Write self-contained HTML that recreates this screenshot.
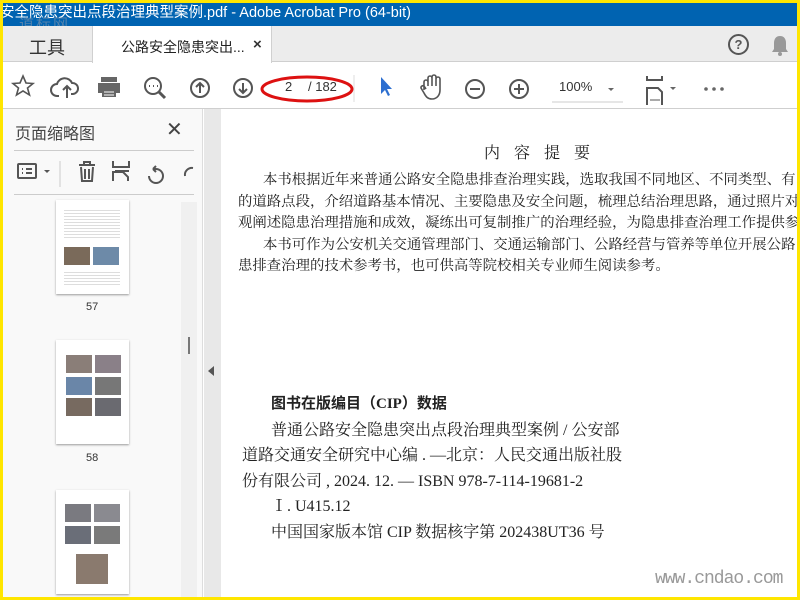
<!DOCTYPE html>
<html><head><meta charset="utf-8"><style>
*{margin:0;padding:0;box-sizing:border-box}
body{width:800px;height:600px;overflow:hidden;background:#ffe600;font-family:"Liberation Sans","Noto Sans CJK SC",sans-serif;position:relative}
.a{position:absolute}
.serif{font-family:"Liberation Serif","Noto Serif CJK SC",serif;color:#222}
</style></head><body>
<div class="a" style="left:3px;top:3px;width:794px;height:594px;background:#fff;overflow:hidden">
 <div class="a" style="left:-3px;top:0;width:797px;height:23px;background:#0063b1;color:#fff;font-size:14.5px;line-height:20px;white-space:nowrap">安全隐患突出点段治理典型案例.pdf - Adobe Acrobat Pro (64-bit)</div>
 <div class="a" style="left:16px;top:10px;color:#8a98aa;font-size:15px;opacity:.6;letter-spacing:2px">道标网</div>
 <div class="a" style="left:0;top:23px;width:794px;height:36px;background:#ececec;border-bottom:1px solid #cfcfcf"></div>
 <div class="a" style="left:26px;top:31px;font-size:18px;color:#333">工具</div>
 <div class="a" style="left:89px;top:23px;width:180px;height:37px;background:#fff;border-left:1px solid #d0d0d0;border-right:1px solid #d0d0d0"></div>
 <div class="a" style="left:118px;top:34px;font-size:14px;color:#222">公路安全隐患突出...</div>
 <div class="a" style="left:250px;top:33px;font-size:15px;color:#333;font-weight:bold">×</div>
 <div class="a" style="left:725px;top:31px;width:21px;height:21px;border:2px solid #555;border-radius:50%;text-align:center;font-size:13px;line-height:17px;color:#555;font-weight:bold">?</div>
 <svg class="a" style="left:767px;top:31px" width="20" height="24"><path d="M10 2c-4 0-6 3-6 7v6l-2 3h16l-2-3V9c0-4-2-7-6-7z" fill="#999"/><circle cx="10" cy="20" r="2" fill="#999"/></svg>
 <div class="a" style="left:0;top:105px;width:794px;height:1px;background:#cfcfcf"></div>
 <svg class="a" style="left:0;top:59px" width="794" height="46" fill="none" stroke="#555" stroke-width="2">
  <path d="M20 14l3 7 7 .5-5.5 4.5 2 7L20 29l-6.5 4 2-7L10 21.5l7-.5z" stroke-width="1.6"/>
  <path d="M56 34h-2a6 6 0 010-12 8 8 0 0115-1 5 5 0 011 11h-2M64 36V24m-4 4l4-4 4 4"/>
  <path d="M98 20h16v-5H98zM95 21h22v10H95zM99 27h14v8H99z" fill="#666" stroke="none"/><path d="M101 30h10M101 33h10" stroke="#fff" stroke-width="1"/>
  <circle cx="150" cy="24" r="8"/><path d="M156 30l6 6" stroke-width="3"/><path d="M146 24h1M150 24h1M154 24h1"/>
  <circle cx="197" cy="26" r="9"/><path d="M197 31v-10m-4 4l4-4 4 4"/>
  <circle cx="240" cy="26" r="9"/><path d="M240 21v10m-4-4l4 4 4-4"/>
  <path d="M351 13v27" stroke="#ddd" stroke-width="1"/>
  <path d="M378 15v17l4-4 3 6 2-1-3-6h5z" fill="#2d6fd0" stroke="none"/>
  <path d="M421 28v-8a2 2 0 014 0v4-8a2 2 0 014 0v8-9a2 2 0 014 0v9-7a2 2 0 014 0v11c0 5-3 9-8 9-4 0-6-2-8-6l-3-5a2 2 0 013-2l2 3" stroke-width="1.6"/>
  <circle cx="472" cy="27" r="9"/><path d="M467 27h10"/>
  <circle cx="516" cy="27" r="9"/><path d="M511 27h10M516 22v10"/>
  <path d="M549 40h71" stroke="#ccc" stroke-width="1"/>
  <path d="M605 26h6l-3 3z" fill="#666" stroke="none"/>
  <path d="M644 14v4h15v-4M644 43V26h11l4 4v13" /><path d="M647 38h10" stroke-width="1"/>
  <path d="M667 25h6l-3 3z" fill="#666" stroke="none"/>
  <circle cx="703" cy="27" r="1.8" fill="#666" stroke="none"/><circle cx="711" cy="27" r="1.8" fill="#666" stroke="none"/><circle cx="719" cy="27" r="1.8" fill="#666" stroke="none"/>
  <ellipse cx="304" cy="27" rx="45" ry="12" stroke="#d11" stroke-width="3"/>
 </svg>
 <div class="a" style="left:282px;top:76px;font-size:13px;color:#333">2</div>
 <div class="a" style="left:305px;top:76px;font-size:13px;color:#333">/ 182</div>
 <div class="a" style="left:556px;top:76px;font-size:13px;color:#333">100%</div>
 <div class="a" style="left:0;top:106px;width:200px;height:488px;background:#f9f9f9;border-right:1px solid #ddd"></div>
 <div class="a" style="left:12px;top:117px;font-size:16px;color:#444">页面缩略图</div>
 <div class="a" style="left:163px;top:114px;font-size:20px;color:#444">✕</div>
 <div class="a" style="left:11px;top:147px;width:180px;height:1px;background:#ccc"></div>
 <div class="a" style="left:11px;top:191px;width:180px;height:1px;background:#ccc"></div>
 <svg class="a" style="left:10px;top:155px" width="182" height="32" fill="none" stroke="#555" stroke-width="2">
  <rect x="5" y="6" width="18" height="14" rx="1"/><path d="M9 11h1M9 15h1M13 11h6M13 15h6"/><path d="M31 12h6l-3 3z" fill="#555" stroke="none"/>
  <path d="M47 3v26" stroke="#ccc" stroke-width="1"/>
  <path d="M66 7h16M71 7V4h6v3M68 9l1 14h10l1-14M72 11v10M76 11v10"/>
  <path d="M100 3v6h16V3M100 23v-9h10l5 5v4M102 13h14"/>
  <path d="M136 18a7 7 0 107-7h-3m0 0l3-3m-3 3l3 3"/><path d="M180 10a7 7 0 00-8 8"/>
 </svg>
 <div class="a" style="left:178px;top:199px;width:16px;height:395px;background:#f0f0f0"></div>
 <div class="a" style="left:185px;top:334px;width:2px;height:17px;background:#777"></div>
 <div class="a" style="left:53px;top:197px;width:73px;height:94px;background:#fff;box-shadow:0 1px 2px #999">
  <div class="a" style="left:8px;top:47px;width:26px;height:18px;background:#7a6a5a"></div><div class="a" style="left:37px;top:47px;width:26px;height:18px;background:#6d8aa8"></div>
  <div class="a" style="left:8px;top:8px;width:56px;height:30px;background:repeating-linear-gradient(#fff 0 2px,#ddd 2px 3px)"></div>
  <div class="a" style="left:8px;top:70px;width:56px;height:16px;background:repeating-linear-gradient(#fff 0 2px,#ddd 2px 3px)"></div>
 </div>
 <div class="a" style="left:83px;top:298px;font-size:11px;color:#333">57</div>
 <div class="a" style="left:53px;top:337px;width:73px;height:104px;background:#fff;box-shadow:0 1px 2px #999">
  <div class="a" style="left:10px;top:15px;width:26px;height:18px;background:#8a7e78"></div><div class="a" style="left:39px;top:15px;width:26px;height:18px;background:#8a8088"></div>
  <div class="a" style="left:10px;top:37px;width:26px;height:18px;background:#6a86a8"></div><div class="a" style="left:39px;top:37px;width:26px;height:18px;background:#777"></div>
  <div class="a" style="left:10px;top:58px;width:26px;height:18px;background:#776a60"></div><div class="a" style="left:39px;top:58px;width:26px;height:18px;background:#6a6a70"></div>
 </div>
 <div class="a" style="left:83px;top:449px;font-size:11px;color:#333">58</div>
 <div class="a" style="left:53px;top:487px;width:73px;height:104px;background:#fff;box-shadow:0 1px 2px #999">
  <div class="a" style="left:9px;top:14px;width:26px;height:18px;background:#7a7a80"></div><div class="a" style="left:38px;top:14px;width:26px;height:18px;background:#8a8a90"></div>
  <div class="a" style="left:9px;top:36px;width:26px;height:18px;background:#6a6e78"></div><div class="a" style="left:38px;top:36px;width:26px;height:18px;background:#7a7a7a"></div>
  <div class="a" style="left:20px;top:64px;width:32px;height:30px;background:#8a7a6e"></div>
 </div>
 <div class="a" style="left:201px;top:106px;width:17px;height:488px;background:#e8e8e8"></div>
 <div class="a" style="left:205px;top:363px;width:0;height:0;border-top:5px solid transparent;border-bottom:5px solid transparent;border-right:6px solid #555"></div>
 <div class="a serif" style="left:481px;top:137px;font-size:16px;letter-spacing:14px">内容提要</div>
 <div class="a serif" style="left:235px;top:167px;font-size:14.4px;line-height:21.5px;white-space:nowrap">
  <div style="padding-left:25px">本书根据近年来普通公路安全隐患排查治理实践，选取我国不同地区、不同类型、有</div>
  <div>的道路点段，介绍道路基本情况、主要隐患及安全问题，梳理总结治理思路，通过照片对</div>
  <div>观阐述隐患治理措施和成效，凝练出可复制推广的治理经验，为隐患排查治理工作提供参考</div>
  <div style="padding-left:25px">本书可作为公安机关交通管理部门、交通运输部门、公路经营与管养等单位开展公路</div>
  <div>患排查治理的技术参考书，也可供高等院校相关专业师生阅读参考。</div>
 </div>
 <div class="a serif" style="left:239px;top:389px;font-size:16px;line-height:25.5px;white-space:nowrap">
  <div style="padding-left:29px;font-family:'Liberation Serif','Noto Sans CJK SC',sans-serif;font-weight:bold;font-size:15px">图书在版编目（CIP）数据</div>
  <div style="padding-left:29px">普通公路安全隐患突出点段治理典型案例 / 公安部</div>
  <div>道路交通安全研究中心编 . —北京：人民交通出版社股</div>
  <div>份有限公司 , 2024. 12. — ISBN 978-7-114-19681-2</div>
  <div style="padding-left:29px">Ⅰ. U415.12</div>
  <div style="padding-left:29px">中国国家版本馆 CIP 数据核字第 202438UT36 号</div>
 </div>
 <div class="a" style="left:652px;top:566px;font-size:18px;color:#999;font-family:'Liberation Mono',monospace;letter-spacing:-1px">www.cndao.com</div>
</div>
</body></html>
